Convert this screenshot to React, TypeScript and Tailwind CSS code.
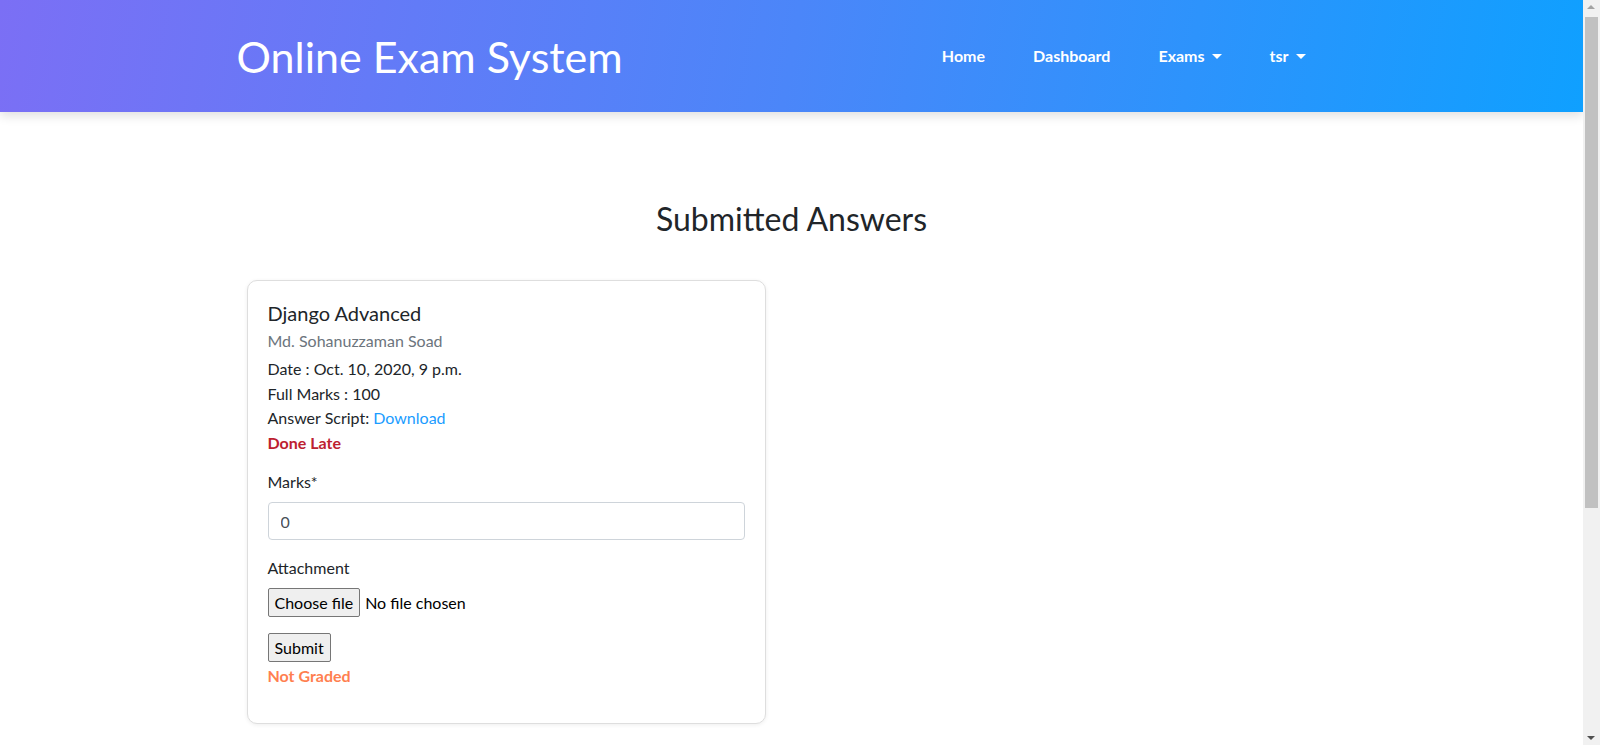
import React from 'react';

function Caret() {
  return (
    <span className="ml-[7px] inline-block h-0 w-0 border-x-[5px] border-t-[5px] border-x-transparent border-t-white" />
  );
}

function NavBar() {
  const links = [
    { label: 'Home', caret: false },
    { label: 'Dashboard', caret: false },
    { label: 'Exams', caret: true },
    { label: 'tsr', caret: true },
  ];

  return (
    <header className="relative z-10 h-[112px] bg-[linear-gradient(100deg,#7b6ff5_0%,#4b86f9_50%,#0fa0ff_100%)] shadow-[0_4px_10px_rgba(0,0,0,0.12)]">
      <div className="mx-auto flex h-full w-[1110px] items-center justify-between">
        <a className="text-[43px] font-normal leading-none text-white">Online Exam System</a>
        <nav className="flex items-center pr-[17px]">
          {links.map((l) => (
            <a key={l.label} className="flex items-center px-6 text-[16px] font-bold text-white">
              {l.label}
              {l.caret && <Caret />}
            </a>
          ))}
        </nav>
      </div>
    </header>
  );
}

function NativeButton({ children }: { children: React.ReactNode }) {
  return (
    <button className="h-[29px] rounded-[2px] border border-[#767676] bg-[#efefef] px-[6px] text-[16px] leading-none text-black">
      {children}
    </button>
  );
}

function AnswerCard() {
  return (
    <div className="ml-[10px] w-[519px] rounded-[10px] border border-[#dedede] bg-white p-5 shadow-[0_1px_4px_rgba(0,0,0,0.07)]">
      <h5 className="text-[20px] leading-6 text-[#212529]">Django Advanced</h5>
      <h6 className="mt-[4px] text-[16px] leading-6 text-[#6c757d]">Md. Sohanuzzaman Soad</h6>
      <div className="mt-[4px] text-[16px] leading-[24.5px] text-[#212529]">
        <p>Date : Oct. 10, 2020, 9 p.m.</p>
        <p>Full Marks : 100</p>
        <p>
          Answer Script: <a className="text-[#1a9cff]">Download</a>
        </p>
        <p className="font-bold text-[#bd2130]">Done Late</p>
      </div>

      <form className="mt-[15px]">
        <div className="mb-4">
          <label className="mb-2 block leading-6 text-[#212529]">Marks*</label>
          <input
            readOnly
            value="0"
            className="block h-[38px] w-full rounded-[4px] border border-[#ced4da] px-3 text-[16px] text-[#495057]"
          />
        </div>
        <div className="mb-4">
          <label className="mb-2 block leading-6 text-[#212529]">Attachment</label>
          <div className="flex items-center">
            <NativeButton>Choose file</NativeButton>
            <span className="ml-[5px] text-[16px] text-black">No file chosen</span>
          </div>
        </div>
        <NativeButton>Submit</NativeButton>
      </form>
      <p className="mb-[15px] mt-[2px] font-bold leading-6 text-[#ff7f50]">Not Graded</p>
    </div>
  );
}

function Scrollbar() {
  return (
    <div className="relative h-full w-[17px] shrink-0 bg-[#f1f1f1]">
      <span className="absolute left-[4px] top-[5px] h-0 w-0 border-x-[4px] border-b-[4px] border-x-transparent border-b-[#a3a3a3]" />
      <div className="absolute left-[2px] right-[2px] top-[17px] h-[491px] bg-[#c1c1c1]" />
      <span className="absolute bottom-[5px] left-[4px] h-0 w-0 border-x-[4px] border-t-[4px] border-x-transparent border-t-[#505050]" />
    </div>
  );
}

export default function App() {
  return (
    <div className="flex h-[745px] overflow-hidden bg-white font-['Lato',sans-serif] text-[16px] text-[#212529]">
      <div className="flex-1 overflow-hidden">
        <NavBar />
        <main className="mx-auto w-[1110px]">
          <h2 className="mt-[88px] text-center text-[32px] leading-[1.2] text-[#212529]">Submitted Answers</h2>
          <div className="mt-[42px]">
            <AnswerCard />
          </div>
        </main>
      </div>
      <Scrollbar />
    </div>
  );
}
